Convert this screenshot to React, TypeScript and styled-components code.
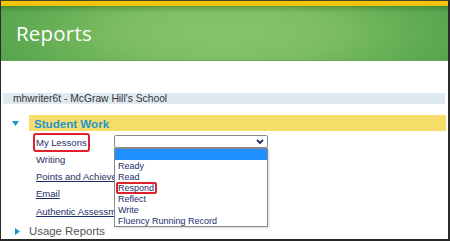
import React from 'react';
import styled, { createGlobalStyle } from 'styled-components';

const Global = createGlobalStyle`
  html, body { margin: 0; padding: 0; background: #fff; }
  body { font-family: "Liberation Sans", Arial, sans-serif; }
`;

const links: { label: string, underline: boolean, boxed?: boolean }[] = [
  { label: 'My Lessons', underline: false, boxed: true },
  { label: 'Writing', underline: false },
  { label: 'Points and Achievements', underline: true },
  { label: 'Email', underline: true },
  { label: 'Authentic Assessment', underline: true },
];

const options: { label: string, boxed?: boolean }[] = [
  { label: 'Ready' },
  { label: 'Read' },
  { label: 'Respond', boxed: true },
  { label: 'Reflect' },
  { label: 'Write' },
  { label: 'Fluency Running Record' },
];

const Frame = styled.div`
  width: 450px;
  height: 241px;
  box-sizing: border-box;
  border-top: 1px solid #4a4520;
  border-left: 1px solid #2a2a2a;
  border-right: 2px solid #2a2a2a;
  border-bottom: 2px solid #2a2a2a;
  overflow: hidden;
  display: flex;
  flex-direction: column;
`;

const Stripe = styled.div`
  height: 5px;
  flex-shrink: 0;
  background: #f3c40c;
`;

const Header = styled.div`
  height: 54px;
  flex-shrink: 0;
  display: flex;
  align-items: center;
  padding-left: 15px;
  background:
    linear-gradient(180deg, rgba(40, 90, 30, 0.35) 0px, rgba(40, 90, 30, 0) 6px),
    radial-gradient(ellipse 60% 140% at 50% 50%, #88c56a 0%, #7dbd61 40%, #5fab52 75%, #4d9f4a 100%);
  color: #fff;
  font-family: "Open Sans", Lato, sans-serif;
  font-size: 20.5px;
  letter-spacing: 0.2px;
  border-bottom: 1px solid #6aa85a;
`;

const Body = styled.div`
  flex: 1;
  padding-top: 32px;
  position: relative;
`;

const SchoolStrip = styled.div`
  margin: 0 3px 0 2px;
  height: 11px;
  background: #dfe9f0;
  padding-left: 10px;
  font-size: 10.3px;
  line-height: 12px;
  color: #333;
`;

const Section = styled.div`
  display: flex;
  align-items: center;
  margin-top: 11px;
  height: 16px;
`;

const Caret = styled.div<{ $open: boolean }>`
  width: 28px;
  display: flex;
  justify-content: flex-start;
  padding-left: ${p => (p.$open ? '11px' : '14px')};
  box-sizing: border-box;
`;

const SectionBar = styled.div`
  flex: 1;
  margin-right: 2px;
  height: 16px;
  background: #f6dc68;
  color: #1b96cf;
  font-weight: bold;
  font-size: 11.6px;
  line-height: 17px;
  padding-left: 5px;
`;

const Rows = styled.div`
  padding-top: 2.5px;
  padding-left: 32px;
`;

const Row = styled.div`
  height: 17.25px;
  display: flex;
  align-items: center;
  position: relative;
  white-space: nowrap;
`;

const LinkText = styled.span<{ $underline: boolean, $boxed?: boolean }>`
  font-size: 9.5px;
  color: #1e2d6a;
  text-decoration: ${p => (p.$underline ? 'underline' : 'none')};
  padding: 2px 1px 2px 1px;
  border: 2px solid ${p => (p.$boxed ? '#e0202a' : 'transparent')};
  border-radius: 3px;
`;

const Select = styled.div`
  position: absolute;
  left: 81px;
  top: 1.5px;
  width: 154px;
  height: 13px;
  box-sizing: border-box;
  border: 1px solid #8a8a8a;
  border-radius: 2px;
  background: #fff;
  display: flex;
  justify-content: flex-end;
  align-items: center;
  padding-right: 3px;
`;

const ListBox = styled.div`
  position: absolute;
  left: 81px;
  top: 14.5px;
  width: 154px;
  box-sizing: border-box;
  border: 1px solid #8a8a8a;
  background: #fff;
  z-index: 2;
  box-shadow: 1px 1px 2px rgba(0, 0, 0, 0.15);
`;

const Option = styled.div<{ $selected?: boolean }>`
  height: 11px;
  line-height: 11px;
  font-size: 9px;
  color: #1e2d6a;
  padding-left: 3px;
  background: ${p => (p.$selected ? '#1e90ff' : 'transparent')};
`;

const OptionLabel = styled.span<{ $boxed?: boolean }>`
  display: inline-block;
  border: 2px solid ${p => (p.$boxed ? '#e0202a' : 'transparent')};
  border-radius: 2px;
  margin-left: -2px;
  line-height: 8px;
  padding: 0 1px 0 0;
`;

const Usage = styled.div`
  display: flex;
  align-items: center;
  margin-top: 3px;
  height: 17px;
  font-size: 11.4px;
  color: #555;
`;

const Down = () => (
  <svg width="7" height="5" viewBox="0 0 7 5"><path d="M0 0 H7 L3.5 5 Z" fill="#1b96cf" /></svg>
);

const Right = () => (
  <svg width="5" height="7" viewBox="0 0 5 7"><path d="M0 0 V7 L5 3.5 Z" fill="#1b96cf" /></svg>
);

const Chevron = () => (
  <svg width="8" height="6" viewBox="0 0 8 6"><path d="M1 1 L4 4 L7 1" stroke="#1e2a66" strokeWidth="1.8" fill="none" /></svg>
);

export default function App() {
  return (
    <>
      <Global />
      <Frame>
        <Stripe />
        <Header>Reports</Header>
        <Body>
          <SchoolStrip>mhwriter6t - McGraw Hill's School</SchoolStrip>
          <Section>
            <Caret $open><Down /></Caret>
            <SectionBar>Student Work</SectionBar>
          </Section>
          <Rows>
            {links.map((l, i) => (
              <Row key={l.label}>
                <LinkText $underline={l.underline} $boxed={l.boxed}>{l.label}</LinkText>
                {i === 0 && (
                  <>
                    <Select><Chevron /></Select>
                    <ListBox>
                      <Option $selected>&nbsp;</Option>
                      {options.map(o => (
                        <Option key={o.label}>
                          <OptionLabel $boxed={o.boxed}>{o.label}</OptionLabel>
                        </Option>
                      ))}
                    </ListBox>
                  </>
                )}
              </Row>
            ))}
          </Rows>
          <Usage>
            <Caret $open={false}><Right /></Caret>
            Usage Reports
          </Usage>
        </Body>
      </Frame>
    </>
  );
}
